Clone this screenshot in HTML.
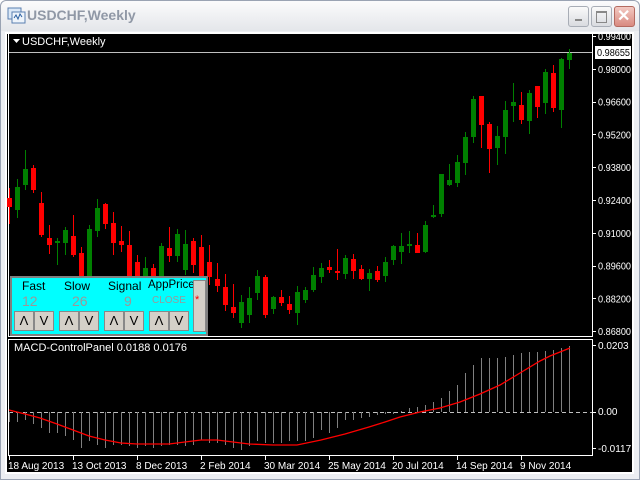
<!DOCTYPE html>
<html><head><meta charset="utf-8"><style>
body{margin:0;width:640px;height:480px;overflow:hidden;background:#fff;font-family:"Liberation Sans",sans-serif;}
#win{position:absolute;left:0;top:0;width:638px;height:478px;border:1px solid #9aa3b3;background:#eceef2;border-radius:6px 6px 0 0;}
#tb{position:absolute;left:0;top:0;width:638px;height:30px;background:linear-gradient(#fbfbfc,#e4e6ea);border-radius:6px 6px 0 0;}
#tt{position:absolute;left:26px;top:6px;font-size:14px;font-weight:bold;color:#9098a6;}
.wb{position:absolute;top:5px;width:19px;height:19px;border:1px solid #a8adb6;border-radius:3px;background:linear-gradient(#fafafa,#d9dbe0);}
svg{position:absolute;left:0;top:0}
.p{position:absolute;font-size:12px;}
</style></head><body>
<div id="win">
<div id="tb"></div>
<svg width="20" height="20" style="left:6px;top:6px"><rect x="1" y="1" width="13" height="11" fill="#dbe8f7" stroke="#5a7fb0"/><rect x="5" y="5" width="13" height="11" fill="#eef4fb" stroke="#5a7fb0"/><path d="M7 11 l2 -3 l2 4 l2 -5 l2 3" stroke="#2a5fa0" fill="none"/></svg>
<div id="tt">USDCHF,Weekly</div>
<div class="wb" style="left:567px"><div style="position:absolute;left:6px;top:12px;width:7px;height:2px;background:#888"></div></div>
<div class="wb" style="left:590px"><div style="position:absolute;left:4px;top:4px;width:9px;height:9px;border:1px solid #888;border-top-width:2px"></div></div>
<div class="wb" style="left:613px;background:linear-gradient(#f3c9c2,#d98a80);border-color:#b46a60"><div style="position:absolute;left:2px;top:-1px;color:#fff;font-size:16px;font-weight:bold">✕</div></div>
</div>
<svg id="c" width="640" height="480"></svg>
<div style="position:absolute;left:10px;top:276px;width:194px;height:56px;background:#00ffff;border:2px solid #808080;">
 <div class="p" style="left:10px;top:1px">Fast</div>
 <div class="p" style="left:52px;top:1px">Slow</div>
 <div class="p" style="left:96px;top:1px">Signal</div>
 <div class="p" style="left:136px;top:1px;font-size:11.5px">AppPrice</div>
 <div class="p" style="left:10px;top:15px;color:#999;font-size:14px">12</div>
 <div class="p" style="left:60px;top:15px;color:#999;font-size:14px">26</div>
 <div class="p" style="left:112px;top:15px;color:#999;font-size:14px">9</div>
 <div class="p" style="left:140px;top:17px;color:#999;font-size:10px">CLOSE</div>
 <div id="btns"></div>
 <div style="position:absolute;left:181px;top:2px;width:11px;height:50px;background:#d4d0c8;border:1px solid #888;"><div style="color:#f00;font-size:11px;position:absolute;left:1px;top:13px">*</div></div>
</div>
<script>
var s='';
function L(x1,y1,x2,y2,c,d){s+='<line x1="'+x1+'" y1="'+y1+'" x2="'+x2+'" y2="'+y2+'" stroke="'+c+'"'+(d?' stroke-dasharray="'+d+'"':'')+'/>';}
function T(x,y,t,c,sz,tl){s+='<text x="'+x+'" y="'+y+'" fill="'+(c||'#fff')+'" font-size="'+(sz||10)+'"'+(tl?' textLength="'+tl+'" lengthAdjust="spacingAndGlyphs"':'')+' font-family="Liberation Sans,sans-serif">'+t+'</text>';}
s+='<rect x="5" y="32" width="629" height="442" fill="#fff"/><rect x="7" y="34" width="625" height="438" fill="#000"/>';
s+='<rect x="8.5" y="33.5" width="584" height="303" fill="none" stroke="#fff"/>';
s+='<rect x="8.5" y="339.5" width="584" height="116" fill="none" stroke="#fff"/>';
var pl=['0.99400','0.98000','0.96600','0.95200','0.93800','0.92400','0.91000','0.89600','0.88200','0.86800'];
for(var i=0;i<pl.length;i++){var y=36+i*32.8;L(592,Math.round(y)+.5,596,Math.round(y)+.5,'#fff');T(598,y+4,pl[i],'#fff',10,33);}
L(9,52.5,592,52.5,'#c0c0c0');
s+='<rect x="594.5" y="45.5" width="37" height="14" fill="#fff" stroke="#000"/>';T(597,56,'0.98655','#000',10,33);
T(22,45,'USDCHF,Weekly','#fff',11);s+='<path d="M13 39h7l-3.5 4z" fill="#fff"/>';
T(14,351,'MACD-ControlPanel 0.0188 0.0176','#fff',11);
T(598,349,'0.0203');T(598,415,'0.00');T(598,452,'-0.0117');
L(592,345.5,596,345.5,'#fff');L(592,412.5,596,412.5,'#fff');L(592,448.5,596,448.5,'#fff');
var C=[[9,'r',198,207,188,224],[17,'g',187,210,179,218],[25,'g',169,185,150,190],[33,'r',168,190,165,193],[41,'r',203,235,192,237],[49,'r',238,245,225,254],[57,'g',241,243,238,265],[65,'g',230,243,227,255],[73,'r',236,255,215,257],[81,'r',253,290,247,292],[89,'g',229,290,225,292],[97,'g',208,231,199,237],[105,'r',204,224,203,229],[113,'r',223,243,212,255],[121,'r',241,245,226,252],[129,'r',245,280,231,282],[137,'r',262,282,255,290],[145,'g',268,280,257,285],[153,'r',268,278,264,285],[161,'g',246,280,243,285],[169,'r',248,256,227,262],[177,'g',234,256,229,262],[185,'g',244,270,230,275],[193,'r',241,265,238,273],[201,'r',247,277,235,284],[209,'r',262,277,245,285],[217,'r',279,286,263,292],[225,'r',287,305,274,311],[233,'r',307,313,284,318],[241,'g',302,323,295,328],[249,'g',298,315,287,323],[257,'g',276,293,270,300],[265,'r',277,315,275,318],[273,'g',297,309,296,314],[281,'r',297,303,290,306],[289,'r',304,310,296,314],[297,'g',292,313,286,325],[305,'g',290,300,287,303],[313,'g',275,290,267,292],[321,'g',268,277,263,283],[329,'r',267,270,260,273],[337,'r',271,273,249,280],[345,'g',258,274,255,279],[353,'r',259,271,254,279],[361,'r',269,279,265,280],[369,'g',273,279,269,291],[377,'r',271,280,266,282],[385,'g',262,276,257,282],[393,'g',246,260,245,265],[401,'g',246,252,233,264],[409,'g',244,246,231,253],[417,'r',245,253,233,252],[425,'g',225,252,221,253],[433,'g',215,217,205,218],[441,'g',174,214,178,217],[449,'g',180,185,164,186],[457,'g',162,183,155,187],[465,'g',137,163,132,175],[473,'g',99,137,96,143],[481,'r',96,125,96,148],[489,'r',124,149,122,173],[497,'g',136,148,126,165],[505,'g',110,137,101,154],[513,'g',102,106,83,122],[521,'r',105,120,92,124],[529,'g',93,121,90,134],[537,'r',86,107,86,118],[545,'g',72,103,69,114],[553,'r',73,108,65,112],[561,'g',59,110,58,128],[569,'g',53,60,49,69]];
C.forEach(function(k){var col=k[1]=='g'?'#008000':'#ff0000';L(k[0]+.5,k[4],k[0]+.5,k[5],col);s+='<rect x="'+(k[0]-2)+'" y="'+k[2]+'" width="5" height="'+Math.max(1,k[3]-k[2])+'" fill="'+col+'"/>';});
var H=[422,422,420,424,428,433,433,436,440,448,441,445,448,445,445,446,448,446,448,446,445,445,446,445,440,443,443,445,448,450,446,441,443,443,443,441,441,441,438,430,433,428,420,420,418,417,415,414,414,411,408,407,405,402,398,391,385,373,365,358,358,358,357,355,353,352,352,351,350,348,346];
L(9,412.5,592,412.5,'#c0c0c0','4,3');
H.forEach(function(v,i){var x=9+8*i+.5;L(x,412,x,v,'#808080');});
var R=[[9,410],[25,414],[40,418],[57,424],[73,430],[89,436],[105,440],[121,443],[137,444],[169,444],[185,442],[201,440],[217,440],[233,442],[249,444],[273,445],[297,445],[321,440],[345,434],[369,427],[385,422],[400,417],[420,412],[440,408],[460,402],[480,394],[500,385],[520,373],[540,361],[550,356],[560,352],[570,348]];
s+='<polyline fill="none" stroke="#f00" stroke-width="1.3" points="'+R.map(function(p){return p.join(',')}).join(' ')+'"/>';
var TL=[[8,'18 Aug 2013'],[72,'13 Oct 2013'],[136,'8 Dec 2013'],[200,'2 Feb 2014'],[264,'30 Mar 2014'],[328,'25 May 2014'],[392,'20 Jul 2014'],[456,'14 Sep 2014'],[520,'9 Nov 2014']];
TL.forEach(function(t){L(t[0]+1.5,456,t[0]+1.5,460,'#fff');T(t[0],469,t[1]);});
document.getElementById('c').innerHTML=s;
var b='';[[2,'Λ'],[22,'V'],[47,'Λ'],[67,'V'],[92,'Λ'],[112,'V'],[137,'Λ'],[157,'V']].forEach(function(q){b+='<div style="position:absolute;left:'+q[0]+'px;top:33px;width:18px;height:18px;background:#d4d0c8;border:1px solid #888;text-align:center;font-size:13px;line-height:18px">'+q[1]+'</div>';});
document.getElementById('btns').innerHTML=b;
</script>
</body></html>
